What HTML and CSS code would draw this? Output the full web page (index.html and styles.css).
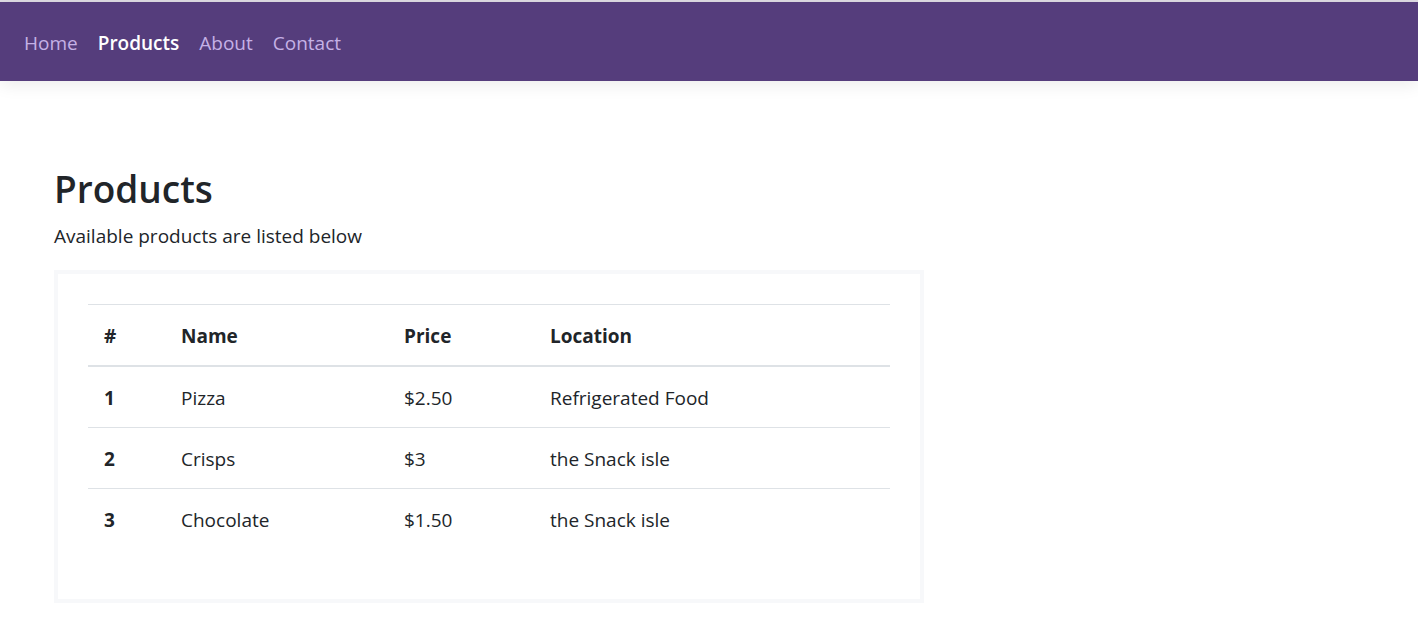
FILE: index.html
```html
<!DOCTYPE html>
<html lang="en">
<head>
<meta charset="utf-8">
<title>Products</title>
<link rel="stylesheet" href="styles.css">
</head>
<body>
<div class="topline"></div>
<header class="navbar">
  <nav class="nav">
    <a class="nav-link" href="#">Home</a>
    <a class="nav-link active" href="#">Products</a>
    <a class="nav-link" href="#">About</a>
    <a class="nav-link" href="#">Contact</a>
  </nav>
</header>
<main class="content">
  <h1 class="title">Products</h1>
  <p class="lead">Available products are listed below</p>
  <div class="card">
    <table class="table">
      <thead>
        <tr><th class="c-id">#</th><th class="c-name">Name</th><th class="c-price">Price</th><th class="c-loc">Location</th></tr>
      </thead>
      <tbody>
        <tr><th>1</th><td>Pizza</td><td>$2.50</td><td>Refrigerated Food</td></tr>
        <tr><th>2</th><td>Crisps</td><td>$3</td><td>the Snack isle</td></tr>
        <tr><th>3</th><td>Chocolate</td><td>$1.50</td><td>the Snack isle</td></tr>
      </tbody>
    </table>
  </div>
</main>
</body>
</html>
```
FILE: styles.css
```css
* { box-sizing: border-box; }
html, body { margin: 0; padding: 0; }
body {
  font-family: "Open Sans", "Noto Sans", "Liberation Sans", sans-serif;
  font-size: 19px;
  line-height: 30px;
  color: #212529;
  background: #fff;
}
.topline { height: 2px; background: #dedbe3; }
.navbar {
  height: 79px;
  background: #553d7c;
  display: flex;
  align-items: center;
  padding: 3px 14px 0;
  box-shadow: 0 4px 16px rgba(0,0,0,0.08);
  position: relative;
}
.nav { display: flex; }
.nav-link {
  padding: 0 10px;
  color: #c5b1e6;
  text-decoration: none;
  font-size: 19px;
}
.nav-link.active { color: #fff; font-weight: 600; }
.content { padding: 84px 54px 0; }
.title {
  margin: 0;
  font-size: 37px;
  font-weight: 600;
  line-height: 48px;
}
.lead { margin: 8px 0 19px; font-size: 19px; }
.card {
  width: 870px;
  border: 4px solid #f7f8fa;
  padding: 30px 30px 30px;
}
.table {
  width: 100%;
  border-collapse: collapse;
  margin-bottom: 20px;
}
.table th, .table td {
  text-align: left;
  padding: 16px 16px 14px;
  border-top: 1px solid #dee2e6;
  vertical-align: top;
}
.table th { font-weight: 700; }
.table thead th { border-bottom: 2px solid #dee2e6; }
.c-id { width: 77px; }
.c-name { width: 223px; }
.c-price { width: 146px; }
```
